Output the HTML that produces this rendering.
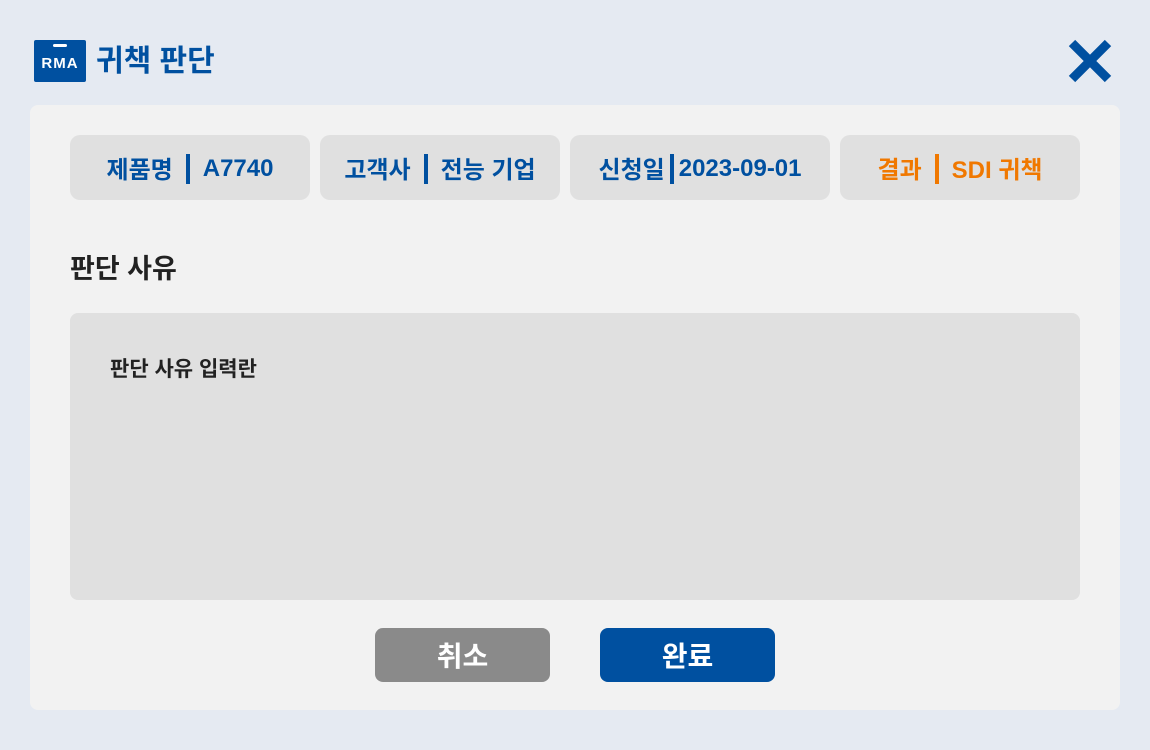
<!DOCTYPE html>
<html><head><meta charset="utf-8"><style>
*{margin:0;padding:0;box-sizing:border-box}
body{width:1150px;height:750px;background:#e5eaf2;font-family:"Liberation Sans","Noto Sans CJK KR",sans-serif;position:relative;overflow:hidden}
.abs{position:absolute}
.logo{left:34px;top:40px;width:52px;height:42px;background:#0050a0;border-radius:2px}
.logo .bar{position:absolute;left:19px;top:4px;width:14px;height:3px;background:#fff;border-radius:2px}
.logo .t{position:absolute;left:0;width:52px;top:15px;text-align:center;color:#fff;font-weight:bold;font-size:15px;letter-spacing:1px}
.title{left:96px;top:43px;font-size:30px;font-weight:bold;color:#0050a0;line-height:38px}
.card{left:30px;top:105px;width:1090px;height:605px;background:#f2f2f2;border-radius:8px}
.chip{top:135px;height:65px;background:#e0e0e0;border-radius:10px;color:#0050a0;font-weight:bold;font-size:24px;display:flex;align-items:center;justify-content:center;white-space:nowrap}
.chip span{position:relative;top:1px}
.chip b{display:inline-block;width:4px;height:30px;background:currentColor;margin:0 13px;position:relative;top:1px}
.chip b.n{margin:0 5px}
.h{left:70px;top:250px;font-size:27px;font-weight:bold;color:#222;line-height:38px}
.ta{left:70px;top:313px;width:1010px;height:287px;background:#e0e0e0;border-radius:8px}
.ph{left:110px;top:355px;font-size:21px;font-weight:bold;color:#222;line-height:30px}
.btn{top:628px;width:175px;height:54px;border-radius:8px;color:#fff;font-weight:bold;font-size:28px;display:flex;align-items:center;justify-content:center}
</style></head><body>
<div class="abs logo"><div class="bar"></div><div class="t">RMA</div></div>
<div class="abs title">귀책 판단</div>
<svg class="abs" style="left:1066px;top:38px" width="48" height="46" viewBox="0 0 48 46"><path d="M6 5 L42 41 M42 5 L6 41" stroke="#0050a0" stroke-width="9" stroke-linecap="butt"/></svg>
<div class="abs card"></div>
<div class="abs chip" style="left:70px;width:240px">제품명<b></b><span>A7740</span></div>
<div class="abs chip" style="left:320px;width:240px">고객사<b></b>전능 기업</div>
<div class="abs chip" style="left:570px;width:260px">신청일<b class="n"></b><span>2023-09-01</span></div>
<div class="abs chip" style="left:840px;width:240px;color:#f07800">결과<b></b>SDI 귀책</div>
<div class="abs h">판단 사유</div>
<div class="abs ta"></div>
<div class="abs ph">판단 사유 입력란</div>
<div class="abs btn" style="left:375px;background:#8a8a8a">취소</div>
<div class="abs btn" style="left:600px;background:#0050a0">완료</div>
</body></html>
